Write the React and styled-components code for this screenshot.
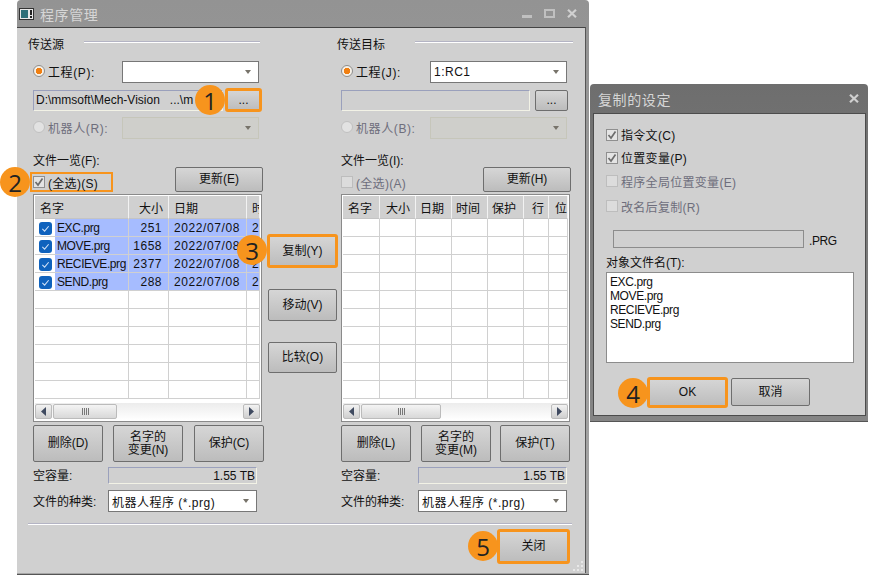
import React from "react";
import styled, { createGlobalStyle, css } from "styled-components";

const GlobalStyle = createGlobalStyle`
  html, body { margin: 0; padding: 0; background: #fff; }
  body { font-family: "Liberation Sans", "Noto Sans CJK SC", sans-serif; font-size: 12px; color: #111; }
`;

const ORANGE = "#f7941d";

const Page = styled.div`
  position: relative;
  width: 869px;
  height: 575px;
  overflow: hidden;
  background: #fff;
`;

const Window = styled.div`
  position: absolute;
  left: ${(p) => p.$x}px;
  top: ${(p) => p.$y}px;
  width: ${(p) => p.$w}px;
  height: ${(p) => p.$h}px;
  display: flex;
  flex-direction: column;
  box-sizing: border-box;
  background: ${(p) => p.$frame};
  border-radius: 4px 4px 0 0;
  padding: 0 ${(p) => p.$padR}px 1px 0;
  border-bottom: 1px solid #555;
`;

const TitleBar = styled.div`
  height: ${(p) => p.$h}px;
  flex: none;
  display: flex;
  align-items: center;
  padding-left: ${(p) => p.$pad}px;
  gap: 6px;
  color: #d6d6d6;
  font-size: 14px;
  letter-spacing: 0.6px;
`;

const TitleControls = styled.div`
  margin-left: auto;
  display: flex;
  align-items: center;
  gap: 12px;
  padding-right: ${(p) => p.$pad}px;
`;

const Body = styled.div`
  flex: 1;
  display: flex;
  flex-direction: column;
  background: #d0d0d0;
  border-top: 1px solid #444;
  border-right: 1px solid #555;
  box-sizing: border-box;
  min-height: 0;
`;

const Columns = styled.div`
  display: grid;
  grid-template-columns: 235px 73px 232px;
  padding: 0 0 0 16px;
`;

const Panel = styled.div`
  display: flex;
  flex-direction: column;
`;

const GroupHead = styled.div`
  display: flex;
  align-items: center;
  height: 20px;
  margin: 5px 0 0 ${(p) => p.$offset}px;
  gap: ${(p) => p.$gap}px;
  &::after {
    content: "";
    flex: 1;
    height: 2px;
    margin-top: -3px;
    margin-right: ${(p) => p.$end}px;
    background: linear-gradient(#b4b4c4 50%, #fff 50%);
  }
`;

const Row = styled.div`
  display: flex;
  align-items: center;
  height: ${(p) => p.$h}px;
  margin-top: ${(p) => p.$mt || 0}px;
`;

const UpdateRow = styled.div`
  display: flex;
  align-items: flex-end;
  height: 25px;
  margin-top: -1px;
`;

const RadioLabel = styled.label`
  display: flex;
  align-items: center;
  width: 89px;
  gap: 3px;
  padding-bottom: 2px;
  letter-spacing: 0.6px;
  color: ${(p) => (p.$off ? "#6e6e7c" : "#111")};
`;

const Radio = styled.span`
  width: 12px;
  height: 12px;
  margin-top: -1px;
  box-sizing: border-box;
  border-radius: 50%;
  flex: none;
  border: 1px solid ${(p) => (p.$off ? "#c0c0c0" : "#8e8e8e")};
  background: ${(p) =>
    p.$on
      ? "radial-gradient(circle, #f07f12 0 3px, #f6f0e6 3.5px)"
      : "#e2e2e2"};
`;

const Combo = styled.div`
  flex: none;
  box-sizing: border-box;
  width: ${(p) => p.$w}px;
  height: 22px;
  display: flex;
  align-items: center;
  padding: 0 3px;
  letter-spacing: 0.5px;
  border: 1px solid ${(p) => (p.$off ? "#c6c6ba" : "#777")};
  background: ${(p) => (p.$off ? "#cfcfcb" : "#fff")};
  white-space: nowrap;
  &::after {
    content: "";
    margin-left: auto;
    margin-right: 4px;
    border-left: 3px solid transparent;
    border-right: 3px solid transparent;
    border-top: 4px solid #77736a;
  }
`;

const PathField = styled.div`
  box-sizing: border-box;
  width: ${(p) => p.$w}px;
  height: 21px;
  display: flex;
  align-items: center;
  padding-left: 2px;
  overflow: hidden;
  white-space: pre;
  border: 1px solid;
  border-color: #9aa0bc #f2f2e6 #f2f2e6 #9aa0bc;
  background: #d0d0d0;
`;

const marked = css`
  outline: 3px solid ${ORANGE};
  outline-offset: -2px;
  border-color: ${ORANGE};
`;

const Button = styled.button`
  box-sizing: border-box;
  flex: none;
  font: inherit;
  color: #111;
  padding: 0;
  width: ${(p) => p.$w}px;
  height: ${(p) => p.$h}px;
  margin-left: ${(p) => p.$ml || 0}px;
  margin-top: ${(p) => p.$mt || 0}px;
  line-height: 13px;
  border: 1px solid #6e6e6e;
  border-radius: 2px;
  background: linear-gradient(#d6d6d6, #bcbcbc);
  ${(p) => p.$mark && marked}
`;

const Label = styled.div`
  white-space: nowrap;
  margin-top: ${(p) => p.$mt || 0}px;
`;

const CheckRow = styled.div`
  display: flex;
  align-items: center;
  gap: 3px;
  white-space: nowrap;
  letter-spacing: 0.3px;
  box-sizing: border-box;
  width: ${(p) => (p.$w ? `${p.$w}px` : "auto")};
  height: ${(p) => p.$h}px;
  color: ${(p) => (p.$off ? "#6e6e7c" : "#111")};
  ${(p) =>
    p.$mark &&
    css`
      margin-left: -3px;
      padding-left: 1px;
      border: 2px solid ${ORANGE};
    `}
`;

const CheckBox = styled.span`
  width: 12px;
  height: 12px;
  flex: none;
  box-sizing: border-box;
  border: 1px solid ${(p) => (p.$off ? "#bdbdbd" : "#8f8f8f")};
  background: ${(p) => (p.$off ? "#dcdcdc" : "#e4e4e4")};
  display: flex;
  align-items: center;
  justify-content: center;
`;

const TableBox = styled.div`
  box-sizing: border-box;
  height: 228px;
  width: 229px;
  margin-top: 2px;
  border: 1px solid #8a8a8a;
  background: #fff;
  display: flex;
  flex-direction: column;
  padding: 1px;
  overflow: hidden;
`;

const TableGrid = styled.div`
  flex: 1;
  min-height: 0;
  overflow: hidden;
`;

const HeadRow = styled.div`
  display: grid;
  grid-template-columns: ${(p) => p.$cols};
  height: 23px;
`;

const HeadCell = styled.div`
  box-sizing: border-box;
  background: #d0d0d0;
  border-right: 1px solid #f2f2f2;
  border-bottom: 1px solid #c4c4c4;
  display: flex;
  align-items: center;
  padding-left: ${(p) => p.$pad}px;
  overflow: hidden;
  white-space: nowrap;
`;

const DataRow = styled.div`
  display: grid;
  grid-template-columns: ${(p) => p.$cols};
  height: 18px;
  box-sizing: border-box;
  border-bottom: 1px solid #d0d0d0;
`;

const Cell = styled.div`
  box-sizing: border-box;
  display: flex;
  align-items: center;
  gap: 2px;
  overflow: hidden;
  white-space: nowrap;
  letter-spacing: ${(p) => p.$ls || 0}px;
  border-right: 1px solid #d0d0d0;
  background: ${(p) => (p.$sel ? "#a6bcff" : "#fff")};
  justify-content: ${(p) => (p.$num ? "flex-end" : "flex-start")};
  padding: ${(p) => (p.$num ? "1px 6px 0 0" : p.$first ? "0" : "1px 0 0 5px")};
`;

const TickGutter = styled.span`
  width: 20px;
  height: 17px;
  flex: none;
  display: flex;
  align-items: center;
  padding-top: 1px;
  box-sizing: border-box;
  background: #fff;
`;

const BlueTick = styled.span`
  width: 13px;
  height: 13px;
  margin-left: 4px;
  flex: none;
  border-radius: 3px;
  background: #0f62bd;
  display: flex;
  align-items: center;
  justify-content: center;
`;

const FileName = styled.span`
  padding-top: 1px;
`;

const HScroll = styled.div`
  height: 17px;
  flex: none;
  display: flex;
  align-items: center;
  gap: 1px;
  background: linear-gradient(#ececec, #fff);
`;

const ScrollArrow = styled.div`
  box-sizing: border-box;
  width: 17px;
  height: 15px;
  flex: none;
  border: 1px solid #bbb;
  border-radius: 2px;
  background: linear-gradient(#f2f2f2, #cfcfcf);
  display: flex;
  align-items: center;
  justify-content: center;
  margin-left: ${(p) => (p.$end ? "auto" : "0")};
`;

const ScrollThumb = styled.div`
  box-sizing: border-box;
  width: ${(p) => p.$w}px;
  height: 15px;
  border: 1px solid #bbb;
  border-radius: 2px;
  background: linear-gradient(#f4f4f4, #d8d8d8);
  display: flex;
  align-items: center;
  justify-content: center;
  gap: 1px;
  i {
    width: 1px;
    height: 7px;
    background: #777;
  }
`;

const ActionRow = styled.div`
  display: flex;
  margin-top: 3px;
  height: 37px;
`;

const InfoRow = styled.div`
  display: flex;
  align-items: center;
  height: ${(p) => p.$h}px;
  margin-top: ${(p) => p.$mt}px;
`;

const InfoLabel = styled.div`
  width: ${(p) => p.$w}px;
  padding-bottom: 2px;
  white-space: nowrap;
  flex: none;
`;

const Capacity = styled.div`
  box-sizing: border-box;
  width: 149px;
  height: 17px;
  display: flex;
  align-items: center;
  justify-content: flex-end;
  padding-right: 1px;
  border: 1px solid;
  border-color: #9aa0bc #f2f2e6 #f2f2e6 #9aa0bc;
`;

const MiddleColumn = styled.div`
  display: flex;
  flex-direction: column;
  padding-top: 207px;
`;

const Footer = styled.div`
  margin: 11px 0 0 11px;
  flex: 1;
  display: flex;
  flex-direction: column;
`;

const Separator = styled.div`
  height: 2px;
  margin-right: 13px;
  background: linear-gradient(#b4b4c4 50%, #fff 50%);
`;

const FooterActions = styled.div`
  display: flex;
  justify-content: flex-end;
  padding: 5px 16px 0 0;
`;

const Grip = styled.svg`
  position: absolute;
  right: 5px;
  bottom: 2px;
`;

const DialogBody = styled.div`
  flex: 1;
  margin: 0 0 4px 3px;
  padding: 9px 0 0 12px;
  background: #d0d0d0;
  border: 1px solid #4c4c4c;
  display: flex;
  flex-direction: column;
  min-height: 0;
`;

const NameInputRow = styled.div`
  display: flex;
  align-items: flex-end;
  gap: 5px;
  margin: 11px 0 0 7px;
  letter-spacing: -0.4px;
`;

const NameInput = styled.div`
  box-sizing: border-box;
  width: 191px;
  height: 18px;
  border: 1px solid #8c8c8c;
`;

const NameList = styled.div`
  box-sizing: border-box;
  width: 248px;
  height: 91px;
  margin-top: 2px;
  padding: 2px 3px;
  background: #fff;
  border: 1px solid #8c8c8c;
  line-height: 14px;
  letter-spacing: -0.4px;
`;

const DialogActions = styled.div`
  display: flex;
  margin: 15px 0 0 42px;
  gap: 4px;
`;

const Badge = styled.div`
  position: absolute;
  left: ${(p) => p.$x - 15}px;
  top: ${(p) => p.$y - 15}px;
  width: 30px;
  height: 30px;
  border-radius: 50%;
  background: ${ORANGE};
  color: #222;
  font-size: 24px;
  font-family: "Open Sans", sans-serif;
  display: flex;
  align-items: center;
  justify-content: center;
`;

const Check = ({ color = "#6d6d6d" }) => (
  <svg width="10" height="10" viewBox="0 0 10 10">
    <path d="M1.5 5 L4 8 L8.5 1.5" fill="none" stroke={color} strokeWidth="1.7" />
  </svg>
);

const BlueCheck = () => (
  <svg width="9" height="9" viewBox="0 0 10 10">
    <path d="M1.5 5.5 L4 8 L8.5 2.5" fill="none" stroke="#cfe0f7" strokeWidth="1.2" />
  </svg>
);

const Arrow = ({ right }) => (
  <svg width="7" height="9" viewBox="0 0 7 9">
    <path d={right ? "M1 0 L6 4.5 L1 9 Z" : "M6 0 L1 4.5 L6 9 Z"} fill="#3f4a60" />
  </svg>
);

const CloseIcon = () => (
  <svg width="10" height="9" viewBox="0 0 10 9">
    <path d="M1 0.8 L9 8.2 M9 0.8 L1 8.2" stroke="#d0d0d0" strokeWidth="2.2" />
  </svg>
);

const AppIcon = () => (
  <svg width="15" height="12" viewBox="0 0 15 12">
    <rect x="0.5" y="0.5" width="14" height="11" fill="#e8e8e8" stroke="#333" />
    <rect x="2" y="2" width="7" height="8" fill="#2f6f78" />
    <rect x="11" y="2" width="2" height="5" fill="#222" />
    <rect x="11" y="8" width="2" height="2" fill="#222" />
  </svg>
);

const Scrollbar = ({ thumb }) => (
  <HScroll>
    <ScrollArrow>
      <Arrow />
    </ScrollArrow>
    <ScrollThumb $w={thumb}>
      <i />
      <i />
      <i />
      <i />
    </ScrollThumb>
    <ScrollArrow $end>
      <Arrow right />
    </ScrollArrow>
  </HScroll>
);

const leftCols = "94px 40px 78px 1fr";
const rightCols = "37px 36px 36px 36px 36px 25px 1fr";
const leftHead = [["名字", 5], ["大小", 10], ["日期", 5], ["时", 5]];
const rightHead = [["名字", 5], ["大小", 6], ["日期", 4], ["时间", 4], ["保护", 4], ["行", 8], ["位", 6]];
const files = [
  ["EXC.prg", "251"],
  ["MOVE.prg", "1658"],
  ["RECIEVE.prg", "2377"],
  ["SEND.prg", "288"],
];

const SourceTable = () => (
  <TableBox>
    <TableGrid>
      <HeadRow $cols={leftCols}>
        {leftHead.map(([h, pad]) => (
          <HeadCell key={h} $pad={pad}>{h}</HeadCell>
        ))}
      </HeadRow>
      {files.map(([name, size]) => (
        <DataRow key={name} $cols={leftCols}>
          <Cell $sel $first $ls={-0.4}>
            <TickGutter>
              <BlueTick>
                <BlueCheck />
              </BlueTick>
            </TickGutter>
            <FileName>{name}</FileName>
          </Cell>
          <Cell $sel $num $ls={0.5}>
            {size}
          </Cell>
          <Cell $sel $ls={0.6}>2022/07/08</Cell>
          <Cell $sel>2</Cell>
        </DataRow>
      ))}
      {Array.from({ length: 6 }).map((_, i) => (
        <DataRow key={i} $cols={leftCols}>
          <Cell />
          <Cell />
          <Cell />
          <Cell />
        </DataRow>
      ))}
    </TableGrid>
    <Scrollbar thumb={64} />
  </TableBox>
);

const TargetTable = () => (
  <TableBox>
    <TableGrid>
      <HeadRow $cols={rightCols}>
        {rightHead.map(([h, pad]) => (
          <HeadCell key={h} $pad={pad}>{h}</HeadCell>
        ))}
      </HeadRow>
      {Array.from({ length: 10 }).map((_, i) => (
        <DataRow key={i} $cols={rightCols}>
          {rightHead.map(([h]) => (
            <Cell key={h} />
          ))}
        </DataRow>
      ))}
    </TableGrid>
    <Scrollbar thumb={80} />
  </TableBox>
);

export default function App() {
  return (
    <Page>
      <GlobalStyle />
      <Window $x={17} $y={0} $w={572} $h={575} $padR={3} $frame="linear-gradient(#939393, #a6a6a6)">
        <TitleBar $h={27} $pad={2}>
          <AppIcon />
          程序管理
          <TitleControls $pad={9}>
            <svg width="10" height="10" viewBox="0 0 10 10">
              <rect x="0" y="6" width="10" height="3" fill="#c0c0c0" />
            </svg>
            <svg width="11" height="10" viewBox="0 0 11 10">
              <rect x="1" y="1" width="9" height="7" fill="none" stroke="#c0c0c0" strokeWidth="2" />
            </svg>
            <CloseIcon />
          </TitleControls>
        </TitleBar>
        <Body>
          <Columns>
            <Panel>
              <GroupHead $offset={-5} $gap={20} $end={8}>传送源</GroupHead>
              <Row $h={22} $mt={8}>
                <RadioLabel>
                  <Radio $on />
                  工程(P):
                </RadioLabel>
                <Combo $w={137} />
              </Row>
              <Row $h={22} $mt={6}>
                <PathField $w={190}>{"D:\\mmsoft\\Mech-Vision   ...\\m"}</PathField>
                <Button $w={35} $h={22} $ml={3} $mark>...</Button>
              </Row>
              <Row $h={22} $mt={6}>
                <RadioLabel $off>
                  <Radio $off />
                  机器人(R):
                </RadioLabel>
                <Combo $w={137} $off />
              </Row>
              <Row $h={18} $mt={11}>
                <Label>文件一览(F):</Label>
              </Row>
              <UpdateRow>
                <CheckRow $w={83} $h={20} $mark>
                  <CheckBox>
                    <Check />
                  </CheckBox>
                  (全选)(S)
                </CheckRow>
                <Button $w={88} $h={25} $ml={62}>更新(E)</Button>
              </UpdateRow>
              <SourceTable />
              <ActionRow>
                <Button $w={70} $h={37}>删除(D)</Button>
                <Button $w={70} $h={37} $ml={10}>名字的<br />变更(N)</Button>
                <Button $w={70} $h={37} $ml={11}>保护(C)</Button>
              </ActionRow>
              <InfoRow $h={17} $mt={5}>
                <InfoLabel $w={75}>空容量:</InfoLabel>
                <Capacity>1.55 TB</Capacity>
              </InfoRow>
              <InfoRow $h={22} $mt={6}>
                <InfoLabel $w={75}>文件的种类:</InfoLabel>
                <Combo $w={149}>机器人程序 (*.prg)</Combo>
              </InfoRow>
            </Panel>

            <MiddleColumn>
              <Button $w={69} $h={32} $mark>复制(Y)</Button>
              <Button $w={69} $h={32} $mt={22}>移动(V)</Button>
              <Button $w={69} $h={31} $mt={21}>比较(O)</Button>
            </MiddleColumn>

            <Panel>
              <GroupHead $offset={-4} $gap={30} $end={0}>传送目标</GroupHead>
              <Row $h={22} $mt={8}>
                <RadioLabel>
                  <Radio $on />
                  工程(J):
                </RadioLabel>
                <Combo $w={137}>1:RC1</Combo>
              </Row>
              <Row $h={22} $mt={6}>
                <PathField $w={189} />
                <Button $w={33} $h={21} $ml={5}>...</Button>
              </Row>
              <Row $h={22} $mt={6}>
                <RadioLabel $off>
                  <Radio $off />
                  机器人(B):
                </RadioLabel>
                <Combo $w={137} $off />
              </Row>
              <Row $h={18} $mt={11}>
                <Label>文件一览(I):</Label>
              </Row>
              <UpdateRow>
                <CheckRow $w={142} $h={20} $off>
                  <CheckBox $off />
                  (全选)(A)
                </CheckRow>
                <Button $w={88} $h={25}>更新(H)</Button>
              </UpdateRow>
              <TargetTable />
              <ActionRow>
                <Button $w={70} $h={37}>删除(L)</Button>
                <Button $w={70} $h={37} $ml={10}>名字的<br />变更(M)</Button>
                <Button $w={70} $h={37} $ml={9}>保护(T)</Button>
              </ActionRow>
              <InfoRow $h={17} $mt={5}>
                <InfoLabel $w={77}>空容量:</InfoLabel>
                <Capacity>1.55 TB</Capacity>
              </InfoRow>
              <InfoRow $h={22} $mt={6}>
                <InfoLabel $w={77}>文件的种类:</InfoLabel>
                <Combo $w={149}>机器人程序 (*.prg)</Combo>
              </InfoRow>
            </Panel>
          </Columns>
          <Footer>
            <Separator />
            <FooterActions>
              <Button $w={71} $h={33} $mark>关闭</Button>
            </FooterActions>
          </Footer>
        </Body>
        <Grip width="12" height="12" viewBox="0 0 12 12">
          <path d="M9 1h2v2H9zM5 5h2v2H5zM9 5h2v2H9zM1 9h2v2H1zM5 9h2v2H5zM9 9h2v2H9z" fill="#e8e8e8" />
        </Grip>
      </Window>

      <Window $x={590} $y={84} $w={278} $h={338} $padR={2} $frame="linear-gradient(#6e6e6e, #858585)">
        <TitleBar $h={29} $pad={8}>
          复制的设定
          <TitleControls $pad={7}>
            <CloseIcon />
          </TitleControls>
        </TitleBar>
        <DialogBody>
          <CheckRow $h={23}>
            <CheckBox><Check /></CheckBox>
            指令文(C)
          </CheckRow>
          <CheckRow $h={23}>
            <CheckBox><Check /></CheckBox>
            位置变量(P)
          </CheckRow>
          <CheckRow $h={24} $off>
            <CheckBox $off />
            程序全局位置变量(E)
          </CheckRow>
          <CheckRow $h={26} $off>
            <CheckBox $off />
            改名后复制(R)
          </CheckRow>
          <NameInputRow>
            <NameInput />
            .PRG
          </NameInputRow>
          <Label $mt={5}>对象文件名(T):</Label>
          <NameList>
            EXC.prg<br />MOVE.prg<br />RECIEVE.prg<br />SEND.prg
          </NameList>
          <DialogActions>
            <Button $w={79} $h={29} $mark>OK</Button>
            <Button $w={79} $h={28}>取消</Button>
          </DialogActions>
        </DialogBody>
      </Window>

      <Badge $x={210} $y={100}>1</Badge>
      <Badge $x={15} $y={182}>2</Badge>
      <Badge $x={252} $y={250}>3</Badge>
      <Badge $x={633} $y={393}>4</Badge>
      <Badge $x={483} $y={546}>5</Badge>
    </Page>
  );
}
